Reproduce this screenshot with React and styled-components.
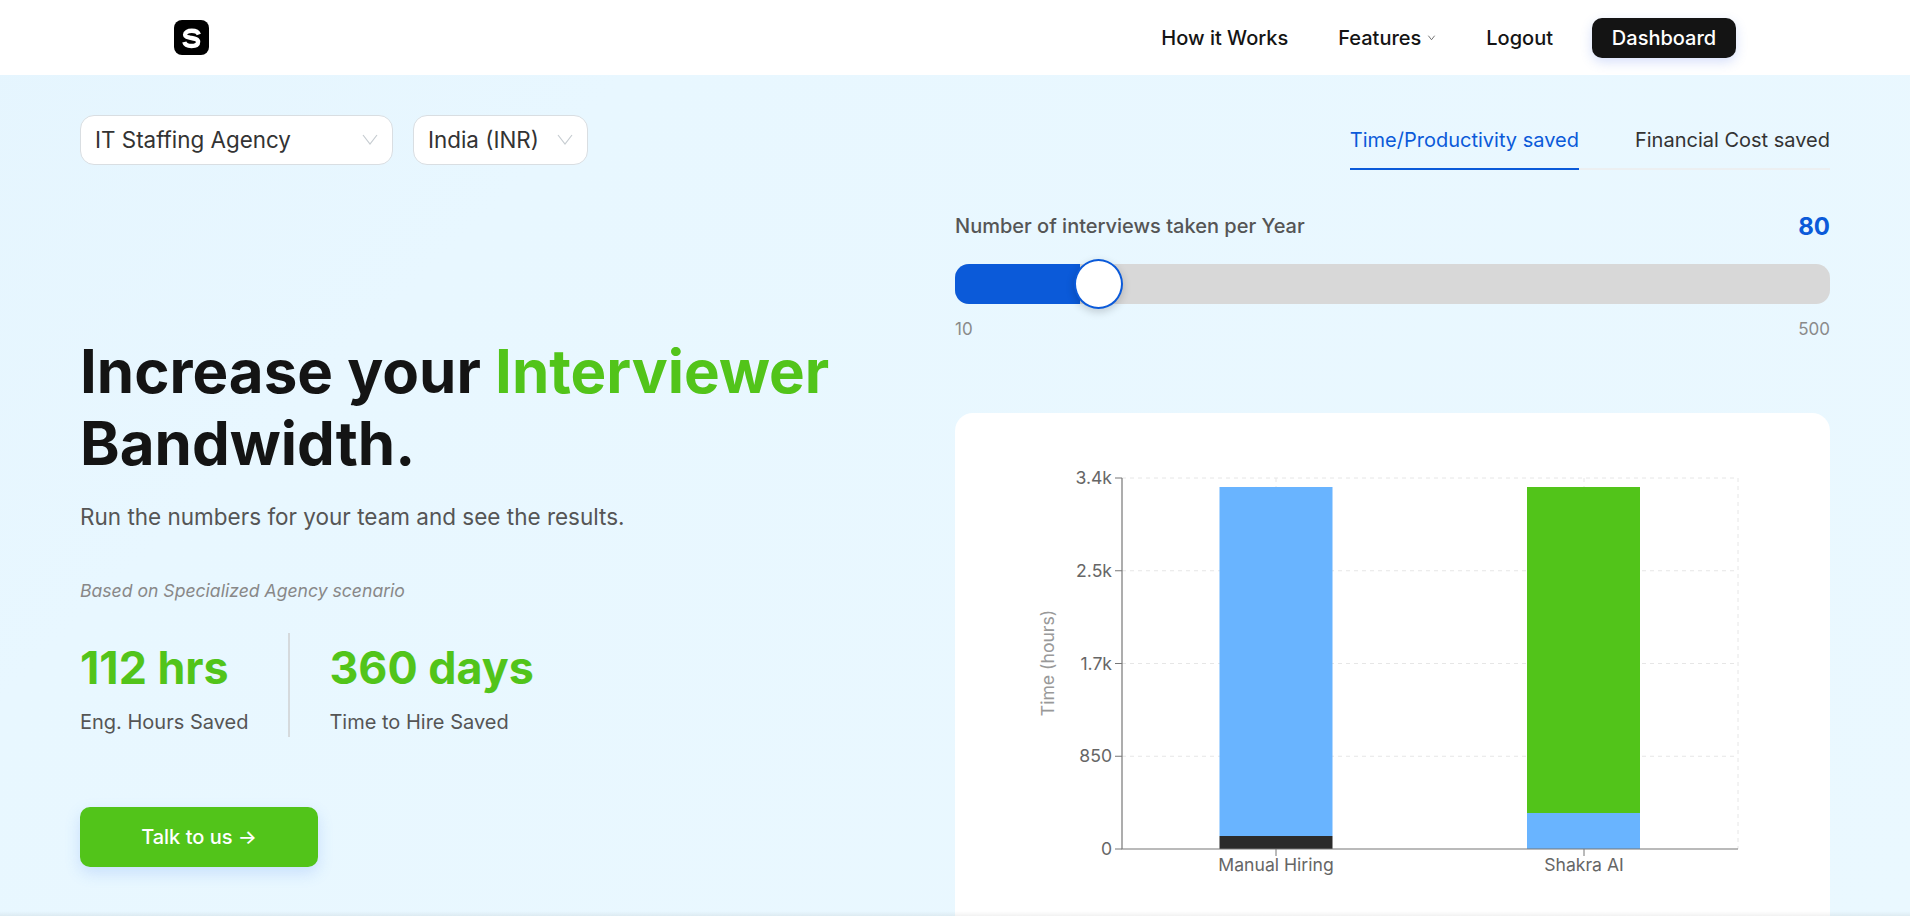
import React from "react";
import styled, { createGlobalStyle } from "styled-components";

const Global = createGlobalStyle`
  html, body { margin: 0; padding: 0; height: 100%; }
  body { font-family: Inter, "Noto Sans", sans-serif; overflow: hidden; background: #e8f7ff; -webkit-font-smoothing: antialiased; }
  * { box-sizing: border-box; }
`;

const Page = styled.div`
  position: relative;
  height: 916px;
  overflow: hidden;
  display: flex;
  flex-direction: column;
  background: linear-gradient(135deg, #e5f5fe 0%, #e8f7ff 25%, #eaf8ff 100%);
`;

const BottomFade = styled.div`
  position: absolute;
  left: 0;
  right: 0;
  bottom: 0;
  height: 5px;
  background: linear-gradient(180deg, rgba(0, 0, 0, 0) 0%, rgba(0, 0, 0, 0.05) 100%);
`;

const Nav = styled.header`
  height: 75px;
  flex: none;
  background: #fff;
  display: flex;
  align-items: center;
  justify-content: space-between;
  padding: 0 174px;
`;

const LogoBox = styled.svg`
  width: 35px;
  height: 35px;
  display: block;
`;

const NavLinks = styled.nav`
  display: flex;
  align-items: center;
  gap: 50px;
`;

const NavLink = styled.a`
  font-size: 20px;
  font-weight: 500;
  color: #141414;
  display: inline-flex;
  align-items: center;
  gap: 6px;
`;

const DashboardButton = styled.button`
  height: 40px;
  width: 144px;
  margin-left: -11px;
  border: 0;
  border-radius: 10px;
  background: #141414;
  color: #fff;
  font: 500 20px Inter, sans-serif;
  box-shadow: 0 4px 12px rgba(70, 110, 230, 0.22);
`;

const Main = styled.main`
  flex: 1;
  display: grid;
  grid-template-columns: 875px 875px;
  padding: 0 80px;
  min-height: 0;
`;

const LeftCol = styled.section`
  display: flex;
  flex-direction: column;
  padding-top: 40px;
`;

const RightCol = styled.section`
  display: flex;
  flex-direction: column;
  padding-top: 40px;
`;

const SelectRow = styled.div`
  display: flex;
  gap: 20px;
`;

const SelectBox = styled.div`
  height: 50px;
  width: ${(p) => p.$w}px;
  background: #fff;
  border: 1px solid #d9dee2;
  border-radius: 14px;
  display: flex;
  align-items: center;
  justify-content: space-between;
  padding: 0 12px 2px 14px;
  font-size: 22.4px;
  color: #333;
`;

const Tabs = styled.div`
  align-self: flex-end;
  display: flex;
  height: 55px;
  border-bottom: 2px solid #eceff1;
`;

const Tab = styled.div`
  font-size: 20px;
  line-height: 50px;
  height: 55px;
  color: ${(p) => (p.$active ? "#0b5ad9" : "#333")};
  border-bottom: 2px solid ${(p) => (p.$active ? "#0b5ad9" : "transparent")};
  margin-left: ${(p) => (p.$active ? 0 : 56)}px;
`;

const Headline = styled.h1`
  margin: 170px 0 0;
  font-size: 60px;
  line-height: 72px;
  font-weight: 700;
  color: #141414;
`;

const Accent = styled.span`
  color: #52c41a;
`;

const Sub = styled.p`
  margin: 23px 0 0;
  font-size: 22.5px;
  line-height: 30px;
  color: #555;
`;

const Scenario = styled.p`
  margin: 47px 0 0;
  font-size: 17.6px;
  line-height: 24px;
  font-style: italic;
  color: #888;
`;

const Stats = styled.div`
  display: flex;
  margin-top: 30px;
  height: 104px;
`;

const Stat = styled.div`
  padding: ${(p) => (p.$first ? "0 40px 0 0" : "0 0 0 39px")};
  border-right: ${(p) => (p.$first ? "2px solid #d5dadd" : "0")};
  display: flex;
  flex-direction: column;
`;

const StatValue = styled.div`
  font-size: 44.8px;
  line-height: 56px;
  font-weight: 700;
  color: #52c41a;
  margin-top: 7px;
`;

const StatLabel = styled.div`
  font-size: 20px;
  line-height: 28px;
  color: #555;
  margin-top: 12px;
`;

const Cta = styled.button`
  margin-top: 70px;
  width: 238px;
  height: 60px;
  border: 0;
  border-radius: 10px;
  background: #52c41a;
  color: #fff;
  font: 500 20px Inter, sans-serif;
  box-shadow: 0 6px 16px rgba(70, 130, 240, 0.2);
`;

const SliderHead = styled.div`
  display: flex;
  justify-content: space-between;
  align-items: center;
  margin-top: 41px;
  height: 30px;
`;

const SliderLabel = styled.span`
  font-size: 20px;
  color: #555;
  font-weight: 500;
`;

const SliderValue = styled.span`
  font-size: 24px;
  font-weight: 700;
  color: #0b5ad9;
`;

const Track = styled.div`
  position: relative;
  height: 40px;
  margin-top: 23px;
  border-radius: 14px;
  background: #d8d8d8;
`;

const Fill = styled.div`
  height: 100%;
  border-radius: 14px 0 0 14px;
  background: #0b5ad9;
`;

const Thumb = styled.div`
  position: absolute;
  top: -5px;
  width: 49px;
  height: 50px;
  border-radius: 50%;
  background: #fff;
  border: 2px solid #0b5ad9;
  box-shadow: 0 3px 8px rgba(0, 0, 0, 0.18);
`;

const Range = styled.div`
  display: flex;
  justify-content: space-between;
  margin-top: 13px;
  font-size: 17px;
  line-height: 24px;
  color: #8a8a8a;
`;

const ChartCard = styled.div`
  margin-top: 72px;
  height: 560px;
  flex: none;
  background: #fff;
  border-radius: 18px;
`;

const ChartSvg = styled.svg`
  display: block;
  width: 875px;
  height: 520px;
`;

const AxisText = styled.text`
  font-family: Inter, sans-serif;
  font-size: 17.6px;
  fill: #666;
`;

const AxisTitle = styled.text`
  font-family: Inter, sans-serif;
  font-size: 17.6px;
  fill: #999;
`;

const Chevron = ({ size = 20, color = "#c6ccd1", w = 1.2 }) => (
  <svg width={size} height={size} viewBox="0 0 20 20" fill="none" stroke={color} strokeWidth={w}>
    <path d="M3 6l7 9 7-9" />
  </svg>
);

const Logo = () => (
  <LogoBox viewBox="0 0 35 35">
    <rect width="35" height="35" rx="8" fill="#000" />
    <path d="M24.800 14.500C24 12 21.500 10.800 17.800 10.800C13.800 10.800 11.100 12.300 11.100 14.700C11.100 17 14 17.300 17.500 18C21.200 18.700 24.100 19.300 24.100 21.800C24.100 24.500 21.400 26 17.500 26C13.600 26 11 24.600 10.300 22" fill="none" stroke="#fff" strokeWidth="4.400" />
  </LogoBox>
);

const X0 = 167, Y0 = 65, W = 616, H = 371;
const ticks = [["3.4k", 0], ["2.5k", 0.25], ["1.7k", 0.5], ["850", 0.75], ["0", 1]];
const cats = [["Manual Hiring", 321], ["Shakra AI", 629]];

const Chart = () => (
  <ChartSvg viewBox="0 0 875 520">
    {ticks.slice(0, 4).map(([t, f]) => (
      <line key={t} x1={X0} x2={X0 + W} y1={Y0 + f * H} y2={Y0 + f * H} stroke="#e6e6e6" strokeDasharray="4 4" />
    ))}
    {[cats[0][1], cats[1][1], X0 + W].map((x) => (
      <line key={x} x1={x} x2={x} y1={Y0} y2={Y0 + H} stroke="#e6e6e6" strokeDasharray="4 4" />
    ))}
    <rect x="264.500" y="74" width="113" height="349" fill="#69b4ff" />
    <rect x="264.500" y="423" width="113" height="13" fill="#2b2b2b" />
    <rect x="572" y="74" width="113" height="326" fill="#52c41a" />
    <rect x="572" y="400" width="113" height="36" fill="#69b4ff" />
    <path d={`M${X0} ${Y0}V${Y0 + H}H${X0 + W}`} fill="none" stroke="#777" strokeWidth="1.2" />
    {ticks.map(([t, f]) => (
      <g key={t}>
        <line x1={X0 - 7} x2={X0} y1={Y0 + f * H} y2={Y0 + f * H} stroke="#777" />
        <AxisText x={X0 - 10} y={Y0 + f * H + 6} textAnchor="end">{t}</AxisText>
      </g>
    ))}
    {cats.map(([c, x]) => (
      <g key={c}>
        <line x1={x} x2={x} y1={Y0 + H} y2={Y0 + H + 7} stroke="#777" />
        <AxisText x={x} y={Y0 + H + 22} textAnchor="middle">{c}</AxisText>
      </g>
    ))}
    <AxisTitle transform="rotate(-90 99 250)" x="99" y="250" textAnchor="middle">Time (hours)</AxisTitle>
  </ChartSvg>
);

export default function App() {
  return (
    <Page>
      <Global />
      <Nav>
        <Logo />
        <NavLinks>
          <NavLink>How it Works</NavLink>
          <NavLink>Features <Chevron size={9} color="#555" w={1.8} /></NavLink>
          <NavLink>Logout</NavLink>
          <DashboardButton>Dashboard</DashboardButton>
        </NavLinks>
      </Nav>
      <Main>
        <LeftCol>
          <SelectRow>
            <SelectBox $w={313}>IT Staffing Agency <Chevron /></SelectBox>
            <SelectBox $w={175}>India (INR) <Chevron /></SelectBox>
          </SelectRow>
          <Headline>Increase your <Accent>Interviewer</Accent><br />Bandwidth.</Headline>
          <Sub>Run the numbers for your team and see the results.</Sub>
          <Scenario>Based on Specialized Agency scenario</Scenario>
          <Stats>
            <Stat $first>
              <StatValue>112 hrs</StatValue>
              <StatLabel>Eng. Hours Saved</StatLabel>
            </Stat>
            <Stat>
              <StatValue>360 days</StatValue>
              <StatLabel>Time to Hire Saved</StatLabel>
            </Stat>
          </Stats>
          <Cta>Talk to us →</Cta>
        </LeftCol>
        <RightCol>
          <Tabs>
            <Tab $active>Time/Productivity saved</Tab>
            <Tab>Financial Cost saved</Tab>
          </Tabs>
          <SliderHead>
            <SliderLabel>Number of interviews taken per Year</SliderLabel>
            <SliderValue>80</SliderValue>
          </SliderHead>
          <Track>
            <Fill style={{ width: `${(125 / 875) * 100}%` }} />
            <Thumb style={{ left: `${(119 / 875) * 100}%` }} />
          </Track>
          <Range><span>10</span><span>500</span></Range>
          <ChartCard><Chart /></ChartCard>
        </RightCol>
      </Main>
      <BottomFade />
    </Page>
  );
}
